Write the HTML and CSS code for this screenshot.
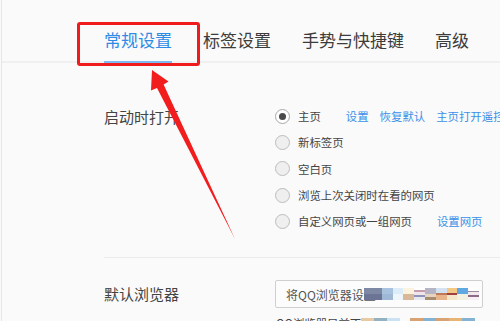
FILE: index.html
```html
<!DOCTYPE html>
<html lang="zh-CN">
<head>
<meta charset="utf-8">
<title>设置</title>
<link rel="stylesheet" href="styles.css">
</head>
<body>
<div class="page">
  <nav class="tabs">
    <span class="tab active">常规设置</span>
    <span class="tab">标签设置</span>
    <span class="tab">手势与快捷键</span>
    <span class="tab">高级</span>
  </nav>

  <section class="section startup">
    <div class="label">启动时打开</div>
    <ul class="options">
      <li class="opt"><span class="radio checked"></span><span class="txt">主页</span>
        <span class="links"><a>设置</a><a>恢复默认</a><a>主页打开遥控器</a></span></li>
      <li class="opt"><span class="radio"></span><span class="txt">新标签页</span></li>
      <li class="opt"><span class="radio"></span><span class="txt">空白页</span></li>
      <li class="opt"><span class="radio"></span><span class="txt">浏览上次关闭时在看的网页</span></li>
      <li class="opt"><span class="radio"></span><span class="txt">自定义网页或一组网页</span>
        <span class="links"><a>设置网页</a></span></li>
    </ul>
  </section>

  <section class="section browser">
    <div class="label">默认浏览器</div>
    <div class="field">
      <div class="input">
        <span class="input-text">将QQ浏览器设置</span><span class="mosaic">
          <i class="m1"></i><i class="m2"></i><i class="m3"></i><i class="m4"></i><i class="m5"></i><i class="m6"></i><i class="m7"></i><i class="m8"></i><i class="m9"></i><i class="m10"></i>
        </span>
      </div>
      <div class="note"><span class="note-text">QQ浏览器目前不是</span><span class="mosaic2"><i class="n1"></i><i class="n2"></i><i class="n3"></i><i class="gap"></i><i class="n4"></i><i class="n5"></i><i class="n4"></i><i class="n6"></i><i class="n5"></i></span></div>
    </div>
  </section>

  <div class="redbox"></div>
  <svg class="arrow" width="500" height="321" viewBox="0 0 500 321">
    <polygon points="152,70 168.5,81.5 163.6,84.5 235,239 157,88 151,90.5" fill="#f21d1d"/>
  </svg>
</div>
</body>
</html>
```

FILE: styles.css
```css
html, body {
  margin: 0;
  padding: 0;
  background: #fafafa;
}
body {
  width: 500px;
  height: 321px;
  overflow: hidden;
  font-family: "Noto Sans CJK SC", "Noto Sans", sans-serif;
  color: #3a3a3a;
}
.page {
  position: relative;
  height: 321px;
  margin-left: 1px;
  border-left: 1px solid #e6e6e6;
}
.tabs {
  display: flex;
  gap: 31px;
  padding-left: 102px;
  border-bottom: 2px solid #f0f0f0;
  height: 61px;
}
.tab {
  font-size: 17px;
  line-height: 24px;
  padding-top: 28px;
  height: 33px;
  color: #3c3c3c;
  white-space: nowrap;
}
.tab.active {
  color: #2f8be6;
  border-bottom: 2px solid #7db9f2;
}
.section {
  display: flex;
  margin-left: 102px;
}
.label {
  width: 171px;
  flex: none;
  font-size: 15px;
  color: #444;
}
.startup {
  padding-top: 40px;
  padding-bottom: 23px;
  border-bottom: 1px solid #ececec;
}
.startup .label {
  line-height: 26px;
  margin-top: 1px;
}
.options {
  list-style: none;
  margin: 0;
  padding: 0;
}
.opt {
  display: flex;
  align-items: center;
  height: 26.3px;
  font-size: 11.4px;
  color: #444;
  white-space: nowrap;
}
.radio {
  width: 13px;
  height: 13px;
  border: 1px solid #bdbdbd;
  border-radius: 50%;
  background: #efefef;
  flex: none;
  margin-right: 8px;
  display: flex;
  align-items: center;
  justify-content: center;
}
.radio.checked {
  background: #fff;
  border-color: #a8a8a8;
}
.radio.checked::after {
  content: "";
  width: 7px;
  height: 7px;
  border-radius: 50%;
  background: #4a4a4a;
}
.links {
  display: flex;
  gap: 11px;
  margin-left: 25px;
}
.links a {
  color: #3a90e8;
}
.browser {
  padding-top: 22px;
}
.browser .label {
  line-height: 28px;
}
.field {
  display: flex;
  flex-direction: column;
}
.input {
  width: 196px;
  height: 26px;
  border: 1px solid #cfcfcf;
  border-radius: 2px;
  background: #fcfcfc;
  display: flex;
  align-items: center;
  padding-left: 10px;
  box-sizing: content-box;
  overflow: hidden;
}
.input-text {
  font-size: 12px;
  color: #555;
  white-space: nowrap;
}
.mosaic {
  display: flex;
  height: 12px;
  margin-left: -12px;
}
.mosaic i {
  display: block;
  width: 10.8px;
  height: 12px;
}
.m1 { width: 18px !important; background: linear-gradient(#7c88a4 50%, #6b7494 50%); }
.m2 { background: linear-gradient(#a9c2de 50%, #9fb8d6 50%); }
.m3 { background: linear-gradient(#dcedf9 50%, #eef6fc 50%); }
.m4 { background: linear-gradient(#fbf3dd 50%, #d9b89a 50%); }
.m5 { background: linear-gradient(#fff 20%, #c69bb0 20%, #c69bb0 35%, #efe6ea 35%, #efe6ea 60%, #8c92b8 60%, #8c92b8 75%, #e8e8f0 75%); }
.m6 { background: linear-gradient(#b4b4c4 50%, #e6d4c0 50%, #e6d4c0 75%, #a88c70 75%); }
.m7 { background: linear-gradient(#d2e2f2 45%, #c07a58 45%, #c07a58 60%, #e8b48c 60%); }
.m8 { background: linear-gradient(#f2c882 40%, #a24040 40%, #a24040 60%, #f4e6c8 60%); }
.m9 { background: linear-gradient(#5fa8e2 50%, #f2f0e0 50%); }
.m10 { background: linear-gradient(#fff 25%, #9c8aa0 25%, #9c8aa0 35%, #f0e8ee 35%, #f0e8ee 60%, #8c6a84 60%, #8c6a84 75%, #f6f0f4 75%); }
.note {
  display: flex;
  align-items: flex-start;
  margin-top: 7px;
  padding-left: 1px;
  font-size: 11.4px;
  line-height: 16px;
  color: #444;
  white-space: nowrap;
}
.mosaic2 {
  display: flex;
  margin-top: 3px;
  margin-left: -12px;
}
.mosaic2 i {
  display: block;
  width: 13px;
  height: 12px;
}
.mosaic2 .gap { width: 10px; background: transparent; }
.n1 { background: #e8caa2; }
.n2 { background: #92b2c2; }
.n3 { background: #cce2f2; }
.n4 { background: #d8a272; }
.n5 { background: #84b2d2; }
.n6 { background: #e8b474; }
.redbox {
  position: absolute;
  left: 75px;
  top: 22px;
  width: 117px;
  height: 38px;
  border: 3px solid #f01c1c;
  border-radius: 3px;
}
.arrow {
  position: absolute;
  left: -2px;
  top: 0;
}
```
